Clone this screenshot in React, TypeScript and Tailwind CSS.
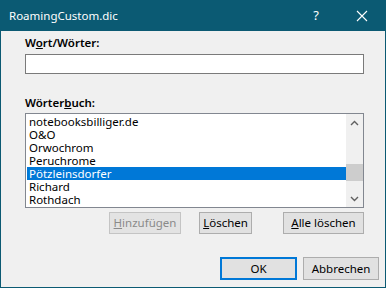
import React from "react";

const words = [
  "notebooksbilliger.de",
  "O&O",
  "Orwochrom",
  "Peruchrome",
  "Pötzleinsdorfer",
  "Richard",
  "Rothdach",
];

const font = { fontFamily: '"Noto Sans", "Open Sans", sans-serif' };

function Btn({
  children,
  className = "",
  disabled = false,
  primary = false,
}: {
  children: React.ReactNode;
  className?: string;
  disabled?: boolean;
  primary?: boolean;
}) {
  return (
    <button
      disabled={disabled}
      className={`h-[22px] flex items-center justify-center text-[11.5px] leading-none ${
        disabled
          ? "bg-[#e3e3e3] border border-[#c4c4c4] text-[#8a8a8a]"
          : primary
          ? "bg-[#e1e1e1] border-2 border-[#0078d7] text-black"
          : "bg-[#e1e1e1] border border-[#adadad] text-black"
      } ${className}`}
    >
      {children}
    </button>
  );
}

export default function App() {
  const selected = 4;

  return (
    <div
      className="w-[386px] h-[288px] bg-[#0b5a73] flex flex-col overflow-hidden"
      style={font}
    >
      {/* Title bar */}
      <div className="h-[31px] flex items-center text-white shrink-0">
        <span className="ml-[9px] text-[11.5px]">RoamingCustom.dic</span>
        <span className="ml-auto mr-[37px] text-[13px]">?</span>
        <svg width="12" height="12" viewBox="0 0 12 12" className="mr-[18px]">
          <path d="M1 1 L11 11 M11 1 L1 11" stroke="white" strokeWidth="1.1" />
        </svg>
      </div>

      {/* Body */}
      <div className="flex-1 mx-[1px] mb-[1px] bg-[#f0f0f0] flex flex-col pl-[24px] pr-[21px] text-[11.5px] text-black">
        <div className="mt-[4px] h-[16px] leading-[16px] font-semibold">
          W<span className="underline">o</span>rt/Wörter:
        </div>
        <div className="mt-[3px] h-[20px] bg-white border border-[#7a7a7a]" />

        <div className="mt-[21px] h-[16px] leading-[16px] font-semibold">
          Wörter<span className="underline">b</span>uch:
        </div>
        <div className="mt-[2px] h-[95px] bg-white border border-[#828790] flex">
          <div className="flex-1 pl-[1px] pt-[1px]">
            {words.map((w, i) => (
              <div
                key={w}
                className={`h-[13px] leading-[13px] pl-[2px] ${
                  i === selected ? "bg-[#0078d7] text-white" : ""
                }`}
              >
                {w}
              </div>
            ))}
          </div>
          <div className="w-[17px] bg-[#f0f0f0] flex flex-col items-center">
            <div className="h-[17px] flex items-center justify-center">
              <svg width="9" height="6" viewBox="0 0 9 6">
                <path d="M1 5 L4.5 1.5 L8 5" stroke="#606060" strokeWidth="1.4" fill="none" />
              </svg>
            </div>
            <div className="mt-[33px] w-[17px] h-[17px] bg-[#cdcdcd]" />
            <div className="mt-auto h-[17px] flex items-center justify-center">
              <svg width="9" height="6" viewBox="0 0 9 6">
                <path d="M1 1 L4.5 4.5 L8 1" stroke="#606060" strokeWidth="1.4" fill="none" />
              </svg>
            </div>
          </div>
        </div>

        <div className="mt-[4px] flex justify-end">
          <Btn disabled className="w-[72px]">
            <span><span className="underline">H</span>inzufügen</span>
          </Btn>
          <Btn className="w-[53px] ml-[18px]">
            <span><span className="underline">L</span>öschen</span>
          </Btn>
          <Btn className="w-[81px] ml-[31px]">
            <span><span className="underline">A</span>lle löschen</span>
          </Btn>
        </div>

        <div className="mt-[23px] flex justify-end -mr-[15px]">
          <Btn primary className="w-[77px] h-[23px]">
            OK
          </Btn>
          <Btn className="w-[76px] h-[23px] ml-[6px]">Abbrechen</Btn>
        </div>
      </div>
    </div>
  );
}
